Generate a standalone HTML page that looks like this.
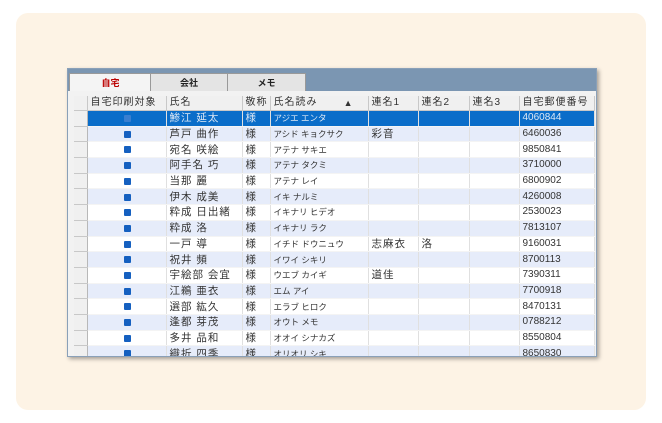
<!DOCTYPE html><html><head><meta charset="utf-8"><style>
body{margin:0;width:662px;height:423px;background:#fff;position:relative;overflow:hidden;font-family:"Liberation Sans","Noto Sans CJK JP",sans-serif;}
.card{position:absolute;left:16px;top:13px;width:630px;height:397px;background:#fdf3e5;border-radius:12px;}
.win{position:absolute;left:67px;top:68px;width:528px;height:287px;background:#7b96b2;box-shadow:2px 2px 4px rgba(0,0,0,.35);overflow:hidden;border:1px solid #8aa0b8;}
.tab{position:absolute;top:4px;height:18px;background:#e4e4e4;border:1px solid #999;border-bottom:none;font-size:9px;font-weight:bold;text-align:center;line-height:18px;color:#222;}
.body{position:absolute;left:0;top:22px;width:528px;height:266px;background:#f2f2f2;}
table{position:absolute;left:6px;top:5px;border-collapse:collapse;table-layout:fixed;font-size:10.5px;color:#333;letter-spacing:1px;}
td{height:14.7px;padding:0 0 0 3px;border-right:1px solid #e0e0e0;border-bottom:1px solid #f4f4f4;white-space:nowrap;overflow:hidden;line-height:14px;}
tr.h td{background:#f0f0f0;border-right:1px solid #c8c8c8;border-bottom:1px solid #c8c8c8;height:13px;font-size:10px;}
td.rh{background:#f0f0f0;border-right:1px solid #b8b8b8;border-bottom:1px solid #c8c8c8;}
tr.b td{background:#e6ecfa}tr.w td{background:#fff}
tr.s td{background:#0a6dc9;color:#dde8f5}
tr td.rh{background:#f0f0f0!important}
.cb{display:inline-block;width:7px;height:7px;background:#1560c0;border-radius:1px;margin-left:33px;vertical-align:middle;}
.k{font-size:8.5px;letter-spacing:0}
.n{letter-spacing:0;font-size:10px}
</style></head><body><div class="card"></div>
<div class="win">
<div class="tab" style="left:1px;width:81px;background:#f4f4f4;color:#b00;height:19px;">自宅</div>
<div class="tab" style="left:82px;width:76px">会社</div>
<div class="tab" style="left:159px;width:77px">メモ</div>
<div class="body">
<table>
<colgroup><col style="width:13px"><col style="width:79px"><col style="width:76px"><col style="width:28px"><col style="width:98px"><col style="width:50px"><col style="width:51px"><col style="width:50px"><col style="width:75px"></colgroup>
<tr class="h"><td class="rh"></td><td>自宅印刷対象</td><td>氏名</td><td>敬称</td><td>氏名読み<span style="float:right;margin-right:14px;font-size:9px">▲</span></td><td>連名1</td><td>連名2</td><td>連名3</td><td>自宅郵便番号</td></tr>
<tr class="s"><td class="rh"></td><td><span class="cb" style="background:#3a7fd0"></span></td><td>鯵江 延太</td><td>様</td><td class="k">アジエ エンタ</td><td></td><td></td><td></td><td class="n">4060844</td></tr>
<tr class="b"><td class="rh"></td><td><span class="cb"></span></td><td>芦戸 曲作</td><td>様</td><td class="k">アシド キョクサク</td><td>彩音</td><td></td><td></td><td class="n">6460036</td></tr>
<tr class="w"><td class="rh"></td><td><span class="cb"></span></td><td>宛名 咲絵</td><td>様</td><td class="k">アテナ サキエ</td><td></td><td></td><td></td><td class="n">9850841</td></tr>
<tr class="b"><td class="rh"></td><td><span class="cb"></span></td><td>阿手名 巧</td><td>様</td><td class="k">アテナ タクミ</td><td></td><td></td><td></td><td class="n">3710000</td></tr>
<tr class="w"><td class="rh"></td><td><span class="cb"></span></td><td>当那 麗</td><td>様</td><td class="k">アテナ レイ</td><td></td><td></td><td></td><td class="n">6800902</td></tr>
<tr class="b"><td class="rh"></td><td><span class="cb"></span></td><td>伊木 成美</td><td>様</td><td class="k">イキ ナルミ</td><td></td><td></td><td></td><td class="n">4260008</td></tr>
<tr class="w"><td class="rh"></td><td><span class="cb"></span></td><td>粋成 日出緒</td><td>様</td><td class="k">イキナリ ヒデオ</td><td></td><td></td><td></td><td class="n">2530023</td></tr>
<tr class="b"><td class="rh"></td><td><span class="cb"></span></td><td>粋成 洛</td><td>様</td><td class="k">イキナリ ラク</td><td></td><td></td><td></td><td class="n">7813107</td></tr>
<tr class="w"><td class="rh"></td><td><span class="cb"></span></td><td>一戸 導</td><td>様</td><td class="k">イチド ドウニュウ</td><td>志麻衣</td><td>洛</td><td></td><td class="n">9160031</td></tr>
<tr class="b"><td class="rh"></td><td><span class="cb"></span></td><td>祝井 頻</td><td>様</td><td class="k">イワイ シキリ</td><td></td><td></td><td></td><td class="n">8700113</td></tr>
<tr class="w"><td class="rh"></td><td><span class="cb"></span></td><td>宇絵部 会宜</td><td>様</td><td class="k">ウエブ カイギ</td><td>道佳</td><td></td><td></td><td class="n">7390311</td></tr>
<tr class="b"><td class="rh"></td><td><span class="cb"></span></td><td>江鵜 亜衣</td><td>様</td><td class="k">エム アイ</td><td></td><td></td><td></td><td class="n">7700918</td></tr>
<tr class="w"><td class="rh"></td><td><span class="cb"></span></td><td>選部 紘久</td><td>様</td><td class="k">エラブ ヒロク</td><td></td><td></td><td></td><td class="n">8470131</td></tr>
<tr class="b"><td class="rh"></td><td><span class="cb"></span></td><td>逢都 芽茂</td><td>様</td><td class="k">オウト メモ</td><td></td><td></td><td></td><td class="n">0788212</td></tr>
<tr class="w"><td class="rh"></td><td><span class="cb"></span></td><td>多井 品和</td><td>様</td><td class="k">オオイ シナカズ</td><td></td><td></td><td></td><td class="n">8550804</td></tr>
<tr class="b"><td class="rh"></td><td><span class="cb"></span></td><td>織折 四季</td><td>様</td><td class="k">オリオリ シキ</td><td></td><td></td><td></td><td class="n">8650830</td></tr>
</table></div></div>
</body></html>
